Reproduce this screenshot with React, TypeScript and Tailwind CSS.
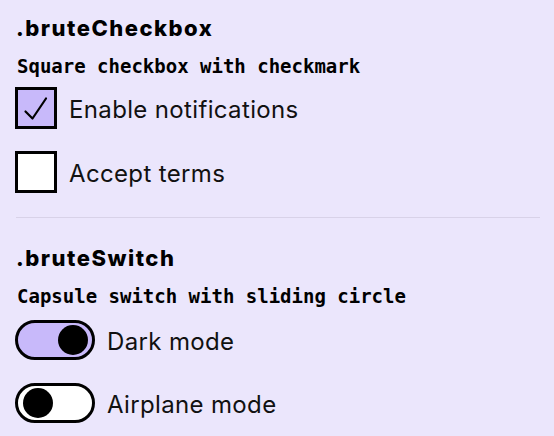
import React from "react";

function Checkbox({ checked, label }: { checked: boolean; label: string }) {
  return (
    <div className="flex items-center gap-[12px] h-[42px]">
      <div
        className={`w-[42px] h-[42px] border-[3px] border-black flex items-center justify-center ${
          checked ? "bg-[#c8b9fa]" : "bg-white"
        }`}
      >
        {checked && (
          <svg width="36" height="36" viewBox="0 0 36 36" fill="none">
            <path d="M7.5 21.5 L14.5 28.5 L28 8.5" stroke="#000" strokeWidth="2.2" strokeLinecap="round" strokeLinejoin="round" />
          </svg>
        )}
      </div>
      <span className="mt-[3px] text-[24px] leading-[30px] tracking-[0.35px] text-[#111]">{label}</span>
    </div>
  );
}

function Switch({ on, label }: { on: boolean; label: string }) {
  return (
    <div className="flex items-center gap-[12px] h-[40px]">
      <div
        className={`relative w-[80px] h-[40px] rounded-full border-[3px] border-black ${
          on ? "bg-[#c8b9fa]" : "bg-white"
        }`}
      >
        <div
          className={`absolute top-[2px] w-[30px] h-[30px] rounded-full bg-black ${
            on ? "left-[40px]" : "left-[5px]"
          }`}
        />
      </div>
      <span className="mt-[3px] text-[24px] leading-[30px] tracking-[0.35px] text-[#111]">{label}</span>
    </div>
  );
}

export default function App() {
  const mono = { fontFamily: '"DejaVu Sans Mono", "Liberation Mono", monospace' };
  return (
    <div
      className="min-h-screen w-full bg-[#ebe6fc] pt-[14px] pl-[15px] pr-[14px] text-black"
      style={{ fontFamily: 'Inter, "Noto Sans", sans-serif' }}
    >
      <h2 className="pl-px text-[22px] leading-[28px] tracking-[1.5px] font-extrabold">.bruteCheckbox</h2>
      <p className="pl-[2px] mt-[12px] text-[19px] leading-[24px] font-bold" style={mono}>
        Square checkbox with checkmark
      </p>
      <div className="mt-[9px] flex flex-col gap-[22px]">
        <Checkbox checked label="Enable notifications" />
        <Checkbox checked={false} label="Accept terms" />
      </div>
      <div className="ml-px mt-[24px] h-px bg-[#d8d2e8]" />
      <h2 className="pl-px mt-[26px] text-[22px] leading-[28px] tracking-[1.5px] font-extrabold">.bruteSwitch</h2>
      <p className="pl-[2px] mt-[12px] text-[19px] leading-[24px] font-bold" style={mono}>
        Capsule switch with sliding circle
      </p>
      <div className="mt-[12px] flex flex-col gap-[23px]">
        <Switch on label="Dark mode" />
        <Switch on={false} label="Airplane mode" />
      </div>
    </div>
  );
}
